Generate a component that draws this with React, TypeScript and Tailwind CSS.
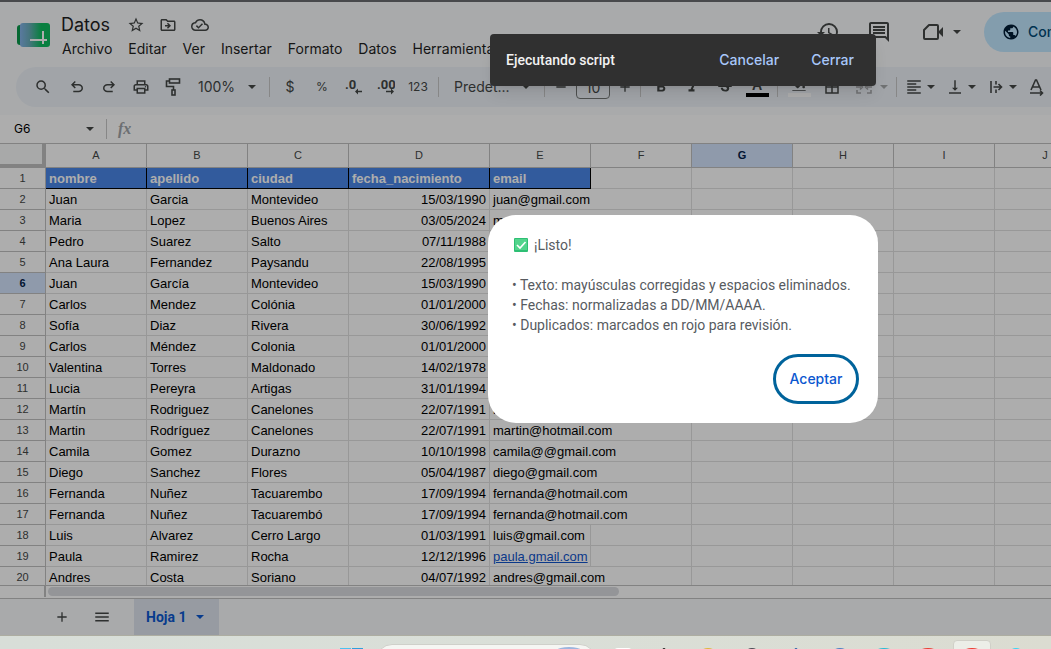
import React from 'react';
import {
  MdStarBorder,
  MdOutlineDriveFileMove,
  MdOutlineCloudDone,
  MdSearch,
  MdOutlinePrint,
  MdFormatAlignLeft,
  MdVerticalAlignBottom,
  MdBorderAll,
  MdFormatColorFill,
  MdFormatItalic,
  MdFormatBold,
  MdStrikethroughS,
  MdHistory,
  MdOutlineComment,
  MdPublic,
  MdAdd,
  MdRemove,
  MdMenu,
} from 'react-icons/md';

type Row = [string, string, string, string, string];

const MENUS = ['Archivo', 'Editar', 'Ver', 'Insertar', 'Formato', 'Datos', 'Herramientas'];
const COLUMNS = ['A', 'B', 'C', 'D', 'E', 'F', 'G', 'H', 'I', 'J'];
const EMPTY_COLUMNS = ['F', 'G', 'H', 'I', 'J'];
const SELECTED_COLUMN = 'G';
const SELECTED_ROW = 6;

const HEADERS = ['nombre', 'apellido', 'ciudad', 'fecha_nacimiento', 'email'];

const ROWS: Row[] = [
  ['Juan', 'Garcia', 'Montevideo', '15/03/1990', 'juan@gmail.com'],
  ['Maria', 'Lopez', 'Buenos Aires', '03/05/2024', 'maria@gmail.com'],
  ['Pedro', 'Suarez', 'Salto', '07/11/1988', ''],
  ['Ana Laura', 'Fernandez', 'Paysandu', '22/08/1995', ''],
  ['Juan', 'García', 'Montevideo', '15/03/1990', ''],
  ['Carlos', 'Mendez', 'Colónia', '01/01/2000', ''],
  ['Sofía', 'Diaz', 'Rivera', '30/06/1992', ''],
  ['Carlos', 'Méndez', 'Colonia', '01/01/2000', ''],
  ['Valentina', 'Torres', 'Maldonado', '14/02/1978', ''],
  ['Lucia', 'Pereyra', 'Artigas', '31/01/1994', ''],
  ['Martín', 'Rodriguez', 'Canelones', '22/07/1991', 'martin@hotmail.com'],
  ['Martin', 'Rodríguez', 'Canelones', '22/07/1991', 'martin@hotmail.com'],
  ['Camila', 'Gomez', 'Durazno', '10/10/1998', 'camila@@gmail.com'],
  ['Diego', 'Sanchez', 'Flores', '05/04/1987', 'diego@gmail.com'],
  ['Fernanda', 'Nuñez', 'Tacuarembo', '17/09/1994', 'fernanda@hotmail.com'],
  ['Fernanda', 'Nuñez', 'Tacuarembó', '17/09/1994', 'fernanda@hotmail.com'],
  ['Luis', 'Alvarez', 'Cerro Largo', '01/03/1991', 'luis@gmail.com'],
  ['Paula', 'Ramirez', 'Rocha', '12/12/1996', 'paula.gmail.com'],
  ['Andres', 'Costa', 'Soriano', '04/07/1992', 'andres@gmail.com'],
];

function SheetsLogo() {
  return (
    <svg className="w-[34px] h-6 shrink-0" viewBox="0 0 34 24" aria-hidden="true">
      <defs>
        <linearGradient id="logo-fade" x1="0" x2="1">
          <stop offset="0" stopColor="#84b4ea" />
          <stop offset="0.3" stopColor="#6aaebc" />
          <stop offset="0.7" stopColor="#0ebc5f" />
        </linearGradient>
      </defs>
      <rect x="0" y="2" width="12" height="20" rx="3" fill="#0a9a4c" />
      <rect x="3" y="0" width="30" height="24" rx="3" fill="url(#logo-fade)" />
      <path d="M13 17h17M26 8v13" stroke="#fff" strokeWidth="2" fill="none" />
    </svg>
  );
}

function Caret() {
  return (
    <svg className="w-2 h-1 shrink-0" viewBox="0 0 8 4" fill="currentColor" aria-hidden="true">
      <path d="M0 0h8L4 4z" />
    </svg>
  );
}

function ToolButton({ label, width = 'w-8', children }: { label: string; width?: string; children: React.ReactNode }) {
  return (
    <button aria-label={label} className={`${width} h-8 shrink-0 flex items-center justify-center`}>
      {children}
    </button>
  );
}

function Divider() {
  return <span className="w-px h-5 bg-[#c7c7c7] shrink-0" />;
}

function DocHeader() {
  return (
    <header className="h-[65px] shrink-0 flex pl-[17px] overflow-hidden">
      <div className="pt-[21px]">
        <SheetsLogo />
      </div>
      <div className="flex-1 min-w-0 pl-[10px] pt-[11px] font-['Inter',sans-serif]">
        <div className="h-6 flex items-center text-[#1f1f1f]">
          <h1 className="text-lg leading-6">Datos</h1>
          <div className="flex items-center gap-[14px] pl-[17px] text-[#444746]">
            <button aria-label="Destacar"><MdStarBorder className="w-[18px] h-[18px]" /></button>
            <button aria-label="Mover"><MdOutlineDriveFileMove className="w-[18px] h-[18px]" /></button>
            <button aria-label="Estado del documento"><MdOutlineCloudDone className="w-[18px] h-[18px]" /></button>
          </div>
        </div>
        <nav className="h-6 flex items-center gap-4 pl-px text-sm text-[#1f1f1f]">
          {MENUS.map((m) => (
            <button key={m}>{m}</button>
          ))}
        </nav>
      </div>
      <div className="w-[235px] h-10 mt-[10px] shrink-0 flex items-center text-[#444746]">
        <button aria-label="Historial de versiones" className="w-6"><MdHistory className="w-6 h-6" /></button>
        <button aria-label="Comentarios" className="ml-[27px]"><MdOutlineComment className="w-6 h-6" /></button>
        <button aria-label="Videollamada" className="ml-8 flex items-center gap-[10px]">
          <svg className="w-5 h-4" viewBox="0 0 20 16" aria-hidden="true">
            <path d="M6 1h8q1 0 1 1v12q0 1-1 1H2q-1 0-1-1V6z" fill="none" stroke="currentColor" strokeWidth="2" strokeLinejoin="round" />
            <path d="M15 8l5-5v10z" fill="currentColor" />
          </svg>
          <Caret />
        </button>
        <button className="h-10 w-[150px] shrink-0 ml-[23px] pl-[18px] rounded-full bg-[#c2e7ff] text-[#004a77] text-sm font-medium flex items-center gap-2 font-['Inter',sans-serif]">
          <MdPublic className="w-[18px] h-[18px] shrink-0 text-[#001d35]" />
          Compartir
        </button>
      </div>
    </header>
  );
}

function Toolbar() {
  return (
    <div className="h-10 ml-4 pl-[11px] shrink-0 flex items-center rounded-l-full bg-[#edf2f8] text-[#444746] overflow-hidden font-['Inter',sans-serif]">
      <ToolButton label="Buscar"><MdSearch className="w-[18px] h-[18px]" /></ToolButton>
      <ToolButton label="Deshacer" width="w-9">
        <svg className="w-[18px] h-[18px]" viewBox="0 -960 960 960" fill="currentColor">
          <path d="M280-200v-80h284q63 0 109.500-40T720-420q0-60-46.500-100T564-560H312l104 104-56 56-200-200 200-200 56 56-104 104h252q97 0 166.500 63T800-420q0 94-69.500 157T564-200H280Z" />
        </svg>
      </ToolButton>
      <ToolButton label="Rehacer" width="w-7">
        <svg className="w-[18px] h-[18px]" viewBox="0 -960 960 960" fill="currentColor">
          <path d="M396-200q-97 0-166.500-63T160-420q0-94 69.500-157T396-640h252L544-744l56-56 200 200-200 200-56-56 104-104H396q-63 0-109.500 40T240-420q0 60 46.500 100T396-280h284v80H396Z" />
        </svg>
      </ToolButton>
      <ToolButton label="Imprimir" width="w-9"><MdOutlinePrint className="w-[18px] h-[18px]" /></ToolButton>
      <ToolButton label="Copiar formato" width="w-7">
        <svg className="w-4 h-[18px]" viewBox="0 0 16 18" fill="none" stroke="currentColor" strokeWidth="1.600">
          <rect x="4.500" y="1" width="10" height="4" />
          <path d="M4.500 3H1.500v5.500h7V12" />
          <rect x="7" y="12" width="3" height="5" />
        </svg>
      </ToolButton>
      <button aria-label="Zoom" className="w-[70px] ml-[11px] mr-px shrink-0 flex items-center justify-between pr-3 text-sm">
        100% <Caret />
      </button>
      <Divider />
      <ToolButton label="Moneda" width="w-10"><span className="text-sm">$</span></ToolButton>
      <ToolButton label="Porcentaje" width="w-6"><span className="text-xs">%</span></ToolButton>
      <ToolButton label="Menos decimales" width="w-10">
        <svg className="w-[18px] h-[18px] font-['Roboto',sans-serif]" viewBox="0 0 18 18" fill="currentColor">
          <text x="0" y="11" fontSize="13" fontWeight="700">.0</text>
          <path d="M10 13.500l3-3v2.300h4v1.500h-4v2.200z" />
        </svg>
      </ToolButton>
      <ToolButton label="Más decimales" width="w-6">
        <svg className="w-[18px] h-[18px] shrink-0 font-['Roboto',sans-serif]" viewBox="0 0 18 18" fill="currentColor">
          <text x="0" y="11" fontSize="13" fontWeight="700">.00</text>
          <path d="M17 13.500l-3-3v2.300h-5v1.500h5v2.200z" />
        </svg>
      </ToolButton>
      <ToolButton label="Más formatos" width="w-10"><span className="text-xs">123</span></ToolButton>
      <Divider />
      <button aria-label="Fuente" className="w-[77px] ml-[15px] mr-[13px] shrink-0 flex items-center text-sm gap-3">
        Predet... <Caret />
      </button>
      <Divider />
      <ToolButton label="Reducir fuente" width="w-[31px]"><MdRemove className="w-4 h-4" /></ToolButton>
      <input
        aria-label="Tamaño de fuente"
        defaultValue="10"
        className="w-[34px] h-6 shrink-0 border border-[#747775] rounded text-center text-sm"
      />
      <ToolButton label="Aumentar fuente" width="w-[30px]"><MdAdd className="w-4 h-4" /></ToolButton>
      <Divider />
      <ToolButton label="Negrita" width="w-10"><MdFormatBold className="w-[18px] h-[18px]" /></ToolButton>
      <ToolButton label="Cursiva" width="w-6"><MdFormatItalic className="w-[18px] h-[18px]" /></ToolButton>
      <ToolButton label="Tachado" width="w-10"><MdStrikethroughS className="w-[18px] h-[18px]" /></ToolButton>
      <ToolButton label="Color del texto" width="w-6">
        <span className="flex flex-col items-center">
          <span className="text-sm leading-4 font-semibold">A</span>
          <span className="w-[23px] h-1 bg-black" />
        </span>
      </ToolButton>
      <span className="w-2 shrink-0" />
      <Divider />
      <ToolButton label="Color de relleno" width="w-[42px]">
        <svg className="w-[23px] h-5" viewBox="0 0 23 20" aria-hidden="true">
          <MdFormatColorFill x="3" y="0" width="18" height="18" />
          <path d="M0 14h23v6H0z" className="fill-[#edf2f8]" />
          <path d="M0 16h23v4H0z" fill="#fff" />
        </svg>
      </ToolButton>
      <ToolButton label="Bordes" width="w-6"><MdBorderAll className="w-[18px] h-[18px]" /></ToolButton>
      <button aria-label="Combinar celdas" className="w-10 ml-2 mr-1 h-8 shrink-0 flex items-center justify-center gap-2 text-[#a6a8aa]">
        <svg className="w-4 h-4" viewBox="0 0 16 16" fill="none" stroke="currentColor" strokeWidth="1.600">
          <path d="M5 2H1v3M11 2h4v3M5 14H1v-3M11 14h4v-3M0 8h5M16 8h-5M4 5.500L6.500 8 4 10.500M12 5.500L9.500 8l2.500 2.500" />
        </svg>
        <Caret />
      </button>
      <Divider />
      <div className="flex items-center shrink-0 pl-2">
        <button aria-label="Alinear" className="w-[41px] flex items-center gap-1"><MdFormatAlignLeft className="w-[18px] h-[18px]" /><Caret /></button>
        <button aria-label="Alinear en vertical" className="w-[41px] flex items-center gap-1"><MdVerticalAlignBottom className="w-[18px] h-[18px]" /><Caret /></button>
        <button aria-label="Ajuste del texto" className="w-[41px] flex items-center gap-1">
          <svg className="w-[18px] h-[18px]" viewBox="0 0 18 18" fill="none" stroke="currentColor" strokeWidth="1.600">
            <path d="M4 3v12M9 3v3.500M9 11.500V15M6.500 9H14M11.500 6l3 3-3 3" />
          </svg>
          <Caret />
        </button>
        <button aria-label="Rotación del texto">
          <svg className="w-[18px] h-[18px]" viewBox="0 0 18 18" fill="none" stroke="currentColor" strokeWidth="1.600">
            <path d="M3 12L7.500 2h1L13 12M4.500 9h7M2 15h12M12 12.500l2.500 2.500-2.500 2.500" />
          </svg>
        </button>
      </div>
    </div>
  );
}

function FormulaBar() {
  return (
    <div className="h-7 mt-2 shrink-0 flex items-center bg-white">
      <input aria-label="Cuadro de nombres" defaultValue="G6" className="w-[86px] pl-[14px] text-xs text-black font-['Inter',sans-serif]" />
      <button aria-label="Rangos con nombre" className="w-5 text-[#444746]"><Caret /></button>
      <Divider />
      <span className="pl-[11px] font-['Liberation_Serif',serif] italic font-bold text-base text-[#a0a4a8]">fx</span>
    </div>
  );
}

function Grid() {
  const line = 'border-r border-b border-[#e1e1e1]';
  return (
    <main className="flex-1 min-h-0 overflow-hidden border-y border-[#c0c0c0] bg-white">
      <table className="table-fixed w-[1096px] border-separate border-spacing-0 font-['Liberation_Sans',Arial,sans-serif] whitespace-nowrap">
        <colgroup>
          <col className="w-[46px]" />
          {COLUMNS.map((c) => (
            <col key={c} className={c === 'D' ? 'w-[141px]' : 'w-[101px]'} />
          ))}
        </colgroup>
        <thead>
          <tr className="h-6 text-[11px] text-[#444746]">
            <th className="p-0 border-r-4 border-b-4 border-[#c0c0c0] bg-[#f8f9fa]" />
            {COLUMNS.map((c) => (
              <th
                key={c}
                className={`p-0 border-r border-b border-[#c0c0c0] ${c === SELECTED_COLUMN ? 'bg-[#d3e3fd] font-bold text-[#041e49]' : 'font-normal'}`}
              >
                {c}
              </th>
            ))}
          </tr>
        </thead>
        <tbody className="text-[13px] text-black">
          <tr className="h-[21px]">
            <th className="p-0 border-r border-b border-[#c0c0c0] font-normal text-[11px] leading-4 text-[#444746]">1</th>
            {HEADERS.map((h) => (
              <th key={h} className="px-[3px] pt-[2px] pb-0 border-r border-b border-black bg-[#4a86e8] text-left font-bold leading-4 text-white">
                {h}
              </th>
            ))}
            {EMPTY_COLUMNS.map((c) => (
              <td key={c} className={line} />
            ))}
          </tr>
          {ROWS.map((row, i) => {
            const n = i + 2;
            const email = row[4];
            // long addresses spill over the edge of column E
            const fits = email === '' || email === 'paula.gmail.com' || email === 'luis@gmail.com';
            return (
              <tr key={n} className="h-[21px]">
                <th
                  className={`p-0 border-r border-b border-[#c0c0c0] text-[11px] leading-4 ${n === SELECTED_ROW ? 'bg-[#d3e3fd] font-bold text-[#041e49]' : 'font-normal text-[#444746]'}`}
                >
                  {n}
                </th>
                {row.slice(0, 4).map((cell, c) => (
                  <td key={c} className={`${line} px-[3px] pt-[2px] pb-0 leading-4 ${c === 3 ? 'text-right' : ''}`}>
                    {cell}
                  </td>
                ))}
                <td className={`border-b border-[#e1e1e1] px-[3px] pt-[2px] pb-0 leading-4 ${fits ? 'border-r' : ''}`}>
                  {email === 'paula.gmail.com' ? (
                    <a href="#paula" className="text-[#1155cc] underline">{email}</a>
                  ) : (
                    email
                  )}
                </td>
                {EMPTY_COLUMNS.map((c) => (
                  <td key={c} className={line} />
                ))}
              </tr>
            );
          })}
        </tbody>
      </table>
    </main>
  );
}

function SheetTabs() {
  return (
    <footer className="shrink-0">
      <div className="h-[13px] flex bg-white border-b border-[#c0c0c0]">
        <span className="w-[46px] h-[11px] shrink-0 border-r-2 border-[#c0c0c0]" />
        <span className="w-[571px] h-[9px] mt-px ml-[2px] rounded-full bg-[#dadce0]" />
      </div>
      <div className="h-[37px] flex items-center border-b border-[#ffffee] text-[#444746]">
        <button aria-label="Agregar hoja" className="w-10 ml-[42px] flex justify-center"><MdAdd className="w-4 h-4" /></button>
        <button aria-label="Todas las hojas" className="w-10 flex justify-center"><MdMenu className="w-[18px] h-[18px]" /></button>
        <button className="h-full w-[85px] ml-3 pl-3 flex items-center gap-[10px] bg-[#dfe5ef] text-sm font-bold text-[#0b57d0] font-['Roboto',sans-serif]">
          Hoja 1 <Caret />
        </button>
      </div>
    </footer>
  );
}

function Snackbar() {
  return (
    <div role="status" className="absolute left-[490px] top-[34px] w-[386px] h-[52px] pl-4 pr-[22px] flex items-center rounded bg-[#303030] shadow-lg text-sm font-medium font-['Roboto',sans-serif] text-[#f2f2f2]">
      <span className="flex-1">Ejecutando script</span>
      <button className="text-[#a8c7fa] mr-8 font-['Inter',sans-serif]">Cancelar</button>
      <button className="text-[#a8c7fa] font-['Inter',sans-serif]">Cerrar</button>
    </div>
  );
}

function ResultDialog() {
  return (
    <div role="dialog" aria-label="Listo" className="absolute left-[488px] top-[215px] w-[390px] pl-6 pr-[19px] pt-5 pb-[19px] rounded-[28px] bg-white text-sm leading-5 text-[#575b5f] font-['Roboto',sans-serif]">
      <p className="flex items-center gap-[6px]">
        <svg className="w-4 h-[14px]" viewBox="0 0 16 14" aria-hidden="true">
          <rect x="2" y="0" width="14" height="14" rx="1" fill="#2ebf74" />
          <rect x="3" y="1" width="12" height="11" fill="#52d48c" />
          <path d="M5 7l3 3 5.500-6" fill="none" stroke="#fff" strokeWidth="1.600" />
        </svg>
        ¡Listo!
      </p>
      <p className="mt-5">• Texto: mayúsculas corregidas y espacios eliminados.</p>
      <p>• Fechas: normalizadas a DD/MM/AAAA.</p>
      <p>• Duplicados: marcados en rojo para revisión.</p>
      <div className="mt-[19px] flex justify-end">
        <button className="w-[86px] h-[50px] rounded-full border-[3px] border-[#00639b] font-medium text-[#0b57d0] font-['Inter',sans-serif]">Aceptar</button>
      </div>
    </div>
  );
}

// Only the upper edge of each taskbar icon is on screen
const TASK_ICONS = [
  { name: 'Inicio', color: '#222222', rx: 2 },
  { name: 'Archivos', color: '#e0b53c', rx: 7 },
  { name: 'Editor', color: '#4b4b55', rx: 6 },
  { name: 'Correo', color: '#2a5aa8', rx: 2 },
  { name: 'Navegador', color: '#4e7fc4', rx: 7 },
  { name: 'Edge', color: '#27bcd4', rx: 9 },
  { name: 'Chrome', color: '#ea3c31', rx: 9 },
  { name: 'Chrome activo', color: '#ea3c31', rx: 9 },
  { name: 'Chat', color: '#35d6f7', rx: 6 },
];

function Taskbar() {
  return (
    <div className="h-[13px] shrink-0 flex items-start overflow-hidden bg-gradient-to-r from-[#d8ded8] via-[#dadfd8] to-[#dbdcd1]">
      <button aria-label="Windows" className="ml-[340px] mt-3 w-[23px] h-px shrink-0 flex gap-px">
        <span className="flex-1 h-px bg-[#4cc2f0]" />
        <span className="flex-1 h-px bg-[#2f9fdc]" />
      </button>
      <button aria-label="Buscar en Windows" className="w-[220px] h-8 ml-[13px] mt-2 mr-[-4px] shrink-0 pr-[6px] flex justify-end rounded-full bg-[#f5f6f3] border border-[#cfd0ca]">
        <svg className="w-10 h-4 mt-[2px]" viewBox="0 0 40 16"><ellipse cx="20" cy="14" rx="22" ry="14" fill="#9db5de" /></svg>
      </button>
      <span className="w-[18px] h-2 ml-[22px] mt-3 mr-[10px] shrink-0 rounded-sm bg-white" />
      {TASK_ICONS.map((icon) => (
        <button key={icon.name} aria-label={icon.name} className="w-11 shrink-0 flex justify-center">
          <span className={`w-[38px] h-10 mt-1 flex justify-center rounded ${icon.name === 'Chrome activo' ? 'bg-[#eceee8] border border-[#d0d0c8]' : 'border border-transparent'}`}>
            <svg className="w-5 h-5 mt-[6px]" viewBox="0 0 20 20">
              <ellipse cx="10" cy="5" rx={icon.rx} ry="4" fill={icon.color} />
            </svg>
          </span>
        </button>
      ))}
    </div>
  );
}

export default function App() {
  return (
    <div className="h-screen flex flex-col overflow-hidden">
      <div className="relative flex-1 min-h-0 flex flex-col overflow-hidden bg-[#f9fbfd]">
        <div className="h-[2px] shrink-0 bg-[#6b6c70]" />
        <DocHeader />
        <Toolbar />
        <FormulaBar />
        <Grid />
        <SheetTabs />
        <div className="absolute inset-0 bg-black/32" />
        <Snackbar />
        <ResultDialog />
      </div>
      <Taskbar />
    </div>
  );
}
